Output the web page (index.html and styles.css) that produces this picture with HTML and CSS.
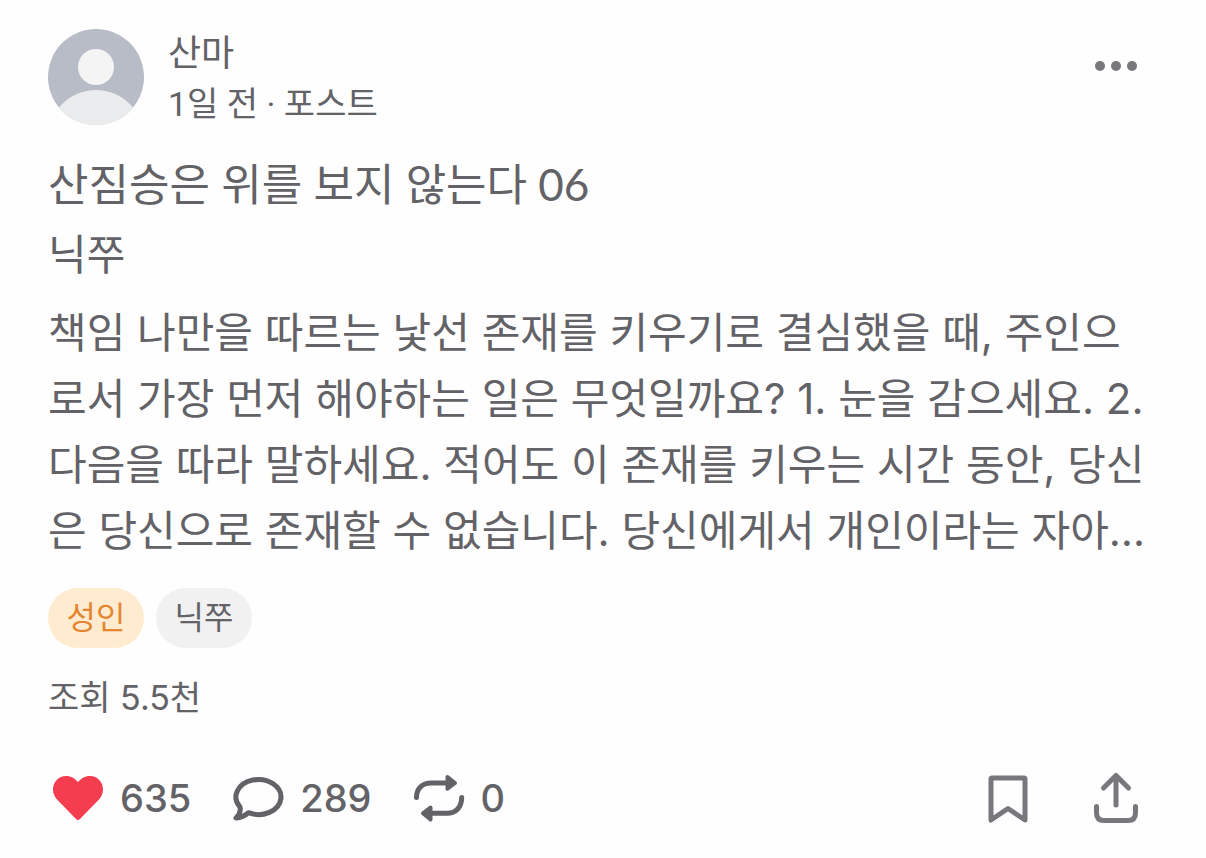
FILE: index.html
```html
<!DOCTYPE html>
<html lang="ko">
<head>
    <meta charset="UTF-8">
    <meta name="viewport" content="width=device-width, initial-scale=1.0">
    <title>산짐승은 위를 보지 않는다 06</title>
    <link rel="stylesheet" href="styles.css">
</head>
<body>
    <article class="post">
        <header class="post-header">
            <svg class="avatar" viewBox="0 0 96 96" aria-hidden="true">
                <defs>
                    <clipPath id="avatar-clip"><circle cx="48" cy="48" r="48"/></clipPath>
                </defs>
                <g clip-path="url(#avatar-clip)">
                    <rect width="96" height="96" fill="#b8bcc6"/>
                    <circle cx="48" cy="38" r="18" fill="#f4f4f4"/>
                    <ellipse cx="48" cy="107" rx="47" ry="46" fill="#ebecee"/>
                </g>
            </svg>
            <div class="author">
                <a class="author-name" href="#">산마</a>
                <p class="author-meta">1일 전 · 포스트</p>
            </div>
            <button class="icon-button" type="button" aria-label="더보기">
                <svg class="icon-more" viewBox="0 0 44 12">
                    <circle cx="6" cy="6" r="5"/>
                    <circle cx="22" cy="6" r="5"/>
                    <circle cx="38" cy="6" r="5"/>
                </svg>
            </button>
        </header>

        <h1 class="post-title">산짐승은 위를 보지 않는다 06</h1>
        <h2 class="post-subtitle">닉쭈</h2>
        <p class="post-body">책임 나만을 따르는 낯선 존재를 키우기로 결심했을 때, 주인으로서 가장 먼저 해야하는 일은 무엇일까요? 1. 눈을 감으세요. 2. 다음을 따라 말하세요. 적어도 이 존재를 키우는 시간 동안, 당신은 당신으로 존재할 수 없습니다. 당신에게서 개인이라는 자아…</p>

        <div class="tags">
            <a class="tag tag-adult" href="#">성인</a>
            <a class="tag" href="#">닉쭈</a>
        </div>

        <p class="views">조회 5.5천</p>

        <footer class="actions">
            <button class="action" type="button" aria-label="좋아요 635">
                <svg class="icon" viewBox="0 0 60 60">
                    <path fill="#f43d4f" d="M30 14C26 9.5 22 8 18 8C10.500 8 5 14 5 21.5C5 26 7 29.5 10 32.5L28 51Q30 53 32 51L50 32.5C53 29.5 55 26 55 21.5C55 14 49.5 8 42 8C38 8 34 9.5 30 14Z"/>
                </svg>
                <span>635</span>
            </button>
            <button class="action" type="button" aria-label="댓글 289">
                <svg class="icon icon-line" viewBox="0 0 60 60">
                    <path d="M20.500 44.700A22.500 17.500 0 1 0 12 39C13 43 11.500 46.500 8 50C12.500 49.500 16.500 48 20.500 44.700Z"/>
                </svg>
                <span>289</span>
            </button>
            <button class="action" type="button" aria-label="리포스트 0">
                <svg class="icon icon-line" viewBox="0 0 60 60">
                    <path d="M7.500 29.500C7.500 21 13 15 22 15H38M52.700 29.500C52.700 39 47 45.300 38 45.300H22"/>
                    <path class="arrowhead" d="M38.500 9L46 15L38.500 20.700ZM21.500 39.500L14 45.300L21.500 51.500Z"/>
                </svg>
                <span>0</span>
            </button>
            <button class="action action-right" type="button" aria-label="북마크">
                <svg class="icon icon-line icon-light" viewBox="0 0 60 60">
                    <path d="M13 11Q13 10 14 10H46Q47 10 47 11V52L30 40.500L13 52Z"/>
                </svg>
            </button>
            <button class="action" type="button" aria-label="공유">
                <svg class="icon icon-line icon-light" viewBox="0 0 60 60">
                    <path d="M30 37V7.500M17.500 20L30 7.500L42.500 20M10.500 38.500V45Q10.500 52.500 18 52.500H42Q49.500 52.500 49.500 45V38.500"/>
                </svg>
            </button>
        </footer>
    </article>
</body>
</html>
```

FILE: styles.css
```css
* {
    box-sizing: border-box;
}
body {
    margin: 0;
    background-color: #fefefe;
    color: #626267;
    font-family: Inter, "Noto Sans CJK KR", sans-serif;
}
h1, h2, p {
    margin: 0;
    font-weight: 400;
}
a {
    color: inherit;
    text-decoration: none;
}
button {
    padding: 0;
    border: none;
    background: none;
    color: inherit;
    cursor: pointer;
}
svg {
    display: block;
}
.post {
    padding: 29px 60px 28px 48px;
}
.post-header {
    display: flex;
    align-items: flex-start;
    gap: 24px;
}
.avatar {
    width: 96px;
    height: 96px;
}
.author {
    flex: 1;
    height: 96px;
    font-family: Roboto, "Noto Sans CJK KR", sans-serif;
    font-size: 34px;
    line-height: 50px;
}
.author-name {
    display: block;
    font-size: 36px;
}
.icon-button {
    padding: 31px 8px 0 0;
}
.icon-more {
    width: 44px;
    height: 12px;
    fill: #77777c;
}
.post-title {
    margin-top: 24px;
    font-family: Lato, "Noto Sans CJK KR", sans-serif;
    font-size: 44px;
    line-height: 70px;
}
.post-subtitle {
    font-size: 42px;
    line-height: 72px;
}
.post-body {
    margin-top: 9px;
    font-size: 42px;
    line-height: 66px;
    word-break: break-all;
}
.tags {
    display: flex;
    gap: 12px;
    margin-top: 24px;
}
.tag {
    min-width: 96px;
    padding: 0 18px;
    border-radius: 30px;
    background-color: #f1f1f2;
    font-size: 32px;
    line-height: 60px;
    text-align: center;
}
.tag-adult {
    background-color: #ffecd0;
    color: #e48630;
}
.views {
    margin-top: 24px;
    font-size: 34px;
    line-height: 52px;
}
.actions {
    display: flex;
    align-items: center;
    gap: 37px;
    margin-top: 44px;
}
.action {
    display: flex;
    align-items: center;
    gap: 12px;
    font-family: Inter, sans-serif;
    font-size: 38px;
    font-weight: 500;
    line-height: 58px;
}
.action-right {
    margin-right: 11px;
    margin-left: auto;
}
.icon {
    width: 60px;
    height: 60px;
}
.icon-line {
    fill: none;
    stroke: #626267;
    stroke-width: 5;
    stroke-linecap: round;
    stroke-linejoin: round;
}
.icon-light {
    stroke: #77777c;
}
.arrowhead {
    fill: #626267;
    stroke-width: 4;
}
```
